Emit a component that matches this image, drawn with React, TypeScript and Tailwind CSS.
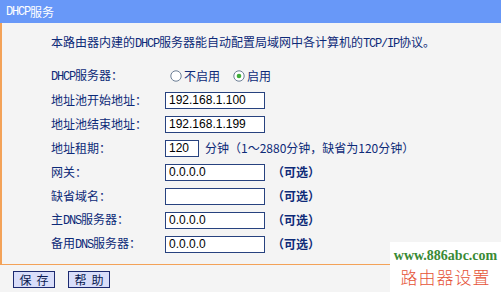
import React from "react";

const NAVY = "text-[#0d2a78]";

function Mono({ children }: { children: React.ReactNode }) {
  return (
    <span className="[font-family:'Liberation_Mono',monospace] text-[12px] tracking-[-1.2px]">{children}</span>
  );
}

function Radio({ checked }: { checked?: boolean }) {
  return (
    <svg width="12" height="12" viewBox="0 0 12 12" className="shrink-0">
      <circle cx="6" cy="6" r="5.2" fill="#ffffff" stroke="#6d7f96" strokeWidth="1" />
      {checked && <circle cx="6" cy="6" r="2.3" fill="#3fae3a" />}
    </svg>
  );
}

function Input({ value, w = "w-[100px]" }: { value: string; w?: string }) {
  return (
    <div
      className={`${w} h-[17px] bg-white border border-[#27427f] flex items-center pl-[3px] text-[12px] text-black [font-family:'Liberation_Sans',sans-serif]`}
    >
      {value}
    </div>
  );
}

function Row({ label, children }: { label: React.ReactNode; children: React.ReactNode }) {
  return (
    <div className="h-[24px] flex items-center">
      <div className={`w-[114px] shrink-0 ${NAVY}`}>{label}</div>
      <div className="flex items-center">{children}</div>
    </div>
  );
}

function Opt() {
  return <span className={`ml-[7px] ${NAVY} font-bold`}>（可选）</span>;
}

export default function App() {
  return (
    <div className="w-[501px] h-[292px] bg-[#f4f4f4] relative overflow-hidden text-[12px] leading-[12px] [font-family:'Noto_Sans_CJK_SC',sans-serif]">
      <div className="h-[23px] bg-[#6898f8] text-white flex items-center pl-[6px] text-[12px]">
        <Mono>DHCP</Mono>服务
      </div>
      <div className="h-[242px] border-l-2 border-b border-[#f3a258] pl-[49px] pt-[13px]">
        <div className={NAVY}>
          本路由器内建的<Mono>DHCP</Mono>服务器能自动配置局域网中各计算机的<Mono>TCP/IP</Mono>协议。
        </div>
        <div className="mt-[14px] flex flex-col">
          <Row label={<><Mono>DHCP</Mono>服务器：</>}>
            <div className="ml-[5px] flex items-center gap-[2px]">
              <Radio />
              <span className={NAVY}>不启用</span>
            </div>
            <div className="ml-[13px] flex items-center gap-[2px]">
              <Radio checked />
              <span className={NAVY}>启用</span>
            </div>
          </Row>
          <Row label="地址池开始地址：">
            <Input value="192.168.1.100" />
          </Row>
          <Row label="地址池结束地址：">
            <Input value="192.168.1.199" />
          </Row>
          <Row label="地址租期：">
            <Input value="120" w="w-[34px]" />
            <span className={`ml-[6px] ${NAVY}`}>分钟（1～2880分钟，缺省为120分钟）</span>
          </Row>
          <Row label="网关：">
            <Input value="0.0.0.0" />
            <Opt />
          </Row>
          <Row label="缺省域名：">
            <Input value="" />
            <Opt />
          </Row>
          <Row label={<>主<Mono>DNS</Mono>服务器：</>}>
            <Input value="0.0.0.0" />
            <Opt />
          </Row>
          <Row label={<>备用<Mono>DNS</Mono>服务器：</>}>
            <Input value="0.0.0.0" />
            <Opt />
          </Row>
        </div>
      </div>
      <div className="flex gap-[13px] pl-[13px] mt-[6px]">
        <button className="w-[42px] h-[17px] bg-[#d9defa] border border-[#1c2a70] text-[12px] leading-[12px] text-[#0a1a50] tracking-[5px] pl-[5px] flex items-center justify-center">
          保存
        </button>
        <button className="w-[42px] h-[17px] bg-[#d9defa] border border-[#1c2a70] text-[12px] leading-[12px] text-[#0a1a50] tracking-[5px] pl-[5px] flex items-center justify-center">
          帮助
        </button>
      </div>
      <div className="absolute left-[390px] top-[242px] w-[111px] h-[50px] bg-white flex flex-col items-center">
        <div className="mt-[7px] text-[14px] leading-[14px] font-bold text-[#3a8a35] [font-family:'Liberation_Serif',serif]">
          www.886abc.com
        </div>
        <div className="mt-[5px] text-[17px] leading-[18px] text-[#e55236] tracking-[1px] font-light">路由器设置</div>
      </div>
    </div>
  );
}
